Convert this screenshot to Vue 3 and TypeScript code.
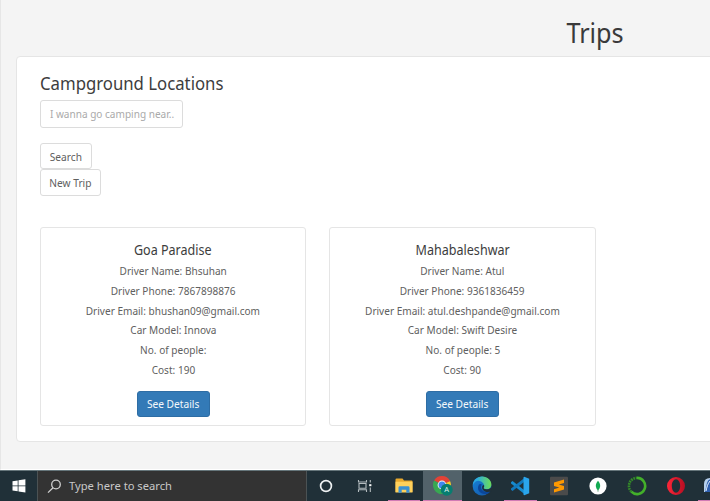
<script setup lang="ts">
interface Trip {
  name: string
  details: string[]
}

const trips: Trip[] = [
  {
    name: 'Goa Paradise',
    details: [
      'Driver Name: Bhsuhan',
      'Driver Phone: 7867898876',
      'Driver Email: bhushan09@gmail.com',
      'Car Model: Innova',
      'No. of people:',
      'Cost: 190',
    ],
  },
  {
    name: 'Mahabaleshwar',
    details: [
      'Driver Name: Atul',
      'Driver Phone: 9361836459',
      'Driver Email: atul.deshpande@gmail.com',
      'Car Model: Swift Desire',
      'No. of people: 5',
      'Cost: 90',
    ],
  },
]
</script>

<template>
  <div class="screen">
    <main class="page">
      <h1>Trips</h1>
      <section class="panel">
        <h2>Campground Locations</h2>
        <form class="search" @submit.prevent>
          <div class="field"><input type="text" placeholder="I wanna go camping near.." /></div>
          <button class="btn search-btn" type="submit"><span>Search</span></button>
          <button class="btn new-btn" type="button"><span>New Trip</span></button>
        </form>
        <div class="cards">
          <article v-for="trip in trips" :key="trip.name" class="card">
            <h3>{{ trip.name }}</h3>
            <p v-for="line in trip.details" :key="line">{{ line }}</p>
            <button class="btn primary" type="button"><span>See Details</span></button>
          </article>
        </div>
      </section>
    </main>

    <footer class="taskbar">
      <div class="start">
        <svg width="14" height="14" viewBox="0 0 14 14" fill="#fff">
          <path d="M.5 2.2 5.7 1.4v5H.5zM6.5 1.3 13.4.3v6.1H6.5zM.5 7.2h5.2v5L.5 11.4zM6.5 7.2h6.9v6.2l-6.9-1z" />
        </svg>
      </div>
      <div class="finder">
        <svg width="15" height="15" viewBox="0 0 15 15" fill="none" stroke="#d0d0d0" stroke-width="1.3">
          <circle cx="9" cy="5.5" r="4.3" />
          <path d="M6 8.8 1 13.6" />
        </svg>
        <span>Type here to search</span>
      </div>
      <div class="apps">
        <div class="app">
          <svg width="20" height="20" viewBox="0 0 20 20"><circle cx="10" cy="10" r="5.4" fill="none" stroke="#eef1f2" stroke-width="1.7" /></svg>
        </div>
        <div class="app">
          <svg width="20" height="20" viewBox="0 0 20 20" fill="none" stroke="#b4bcbf" stroke-width="1.1">
            <path d="M3.5 4v2h8V4M3.5 16v-2.3h8V16M4 7.5h7v4.8H4zM15.3 4v2.5M15.3 11.5V16" />
            <path d="M14.2 9.2h2.2" stroke-width="2" stroke="#fff" />
          </svg>
        </div>
        <div class="app open">
          <svg width="20" height="20" viewBox="0 0 20 20">
            <path d="M1.5 3.5q0-1 1-1h6l1.5 2h7.5q1 0 1 1V16h-17z" fill="#e9a92d" />
            <path d="M1.5 5.7h17v10.8h-17z" fill="#ffd15c" />
            <path d="M4.5 16.8v-5.2q0-1.4 1.4-1.4h8.2q1.4 0 1.4 1.4v5.2h-3.2v-3.1H7.7v3.1z" fill="#3a91d5" />
          </svg>
        </div>
        <div class="app open active">
          <svg width="22" height="22" viewBox="0 0 22 22">
            <path d="M10 10 2.1 5.5A9.1 9.1 0 0 1 18 6z" fill="#e34236" />
            <path d="M10 10 18 6a9.1 9.1 0 0 1-8 13.1z" fill="#f9cb27" />
            <path d="M10 10 10 19.1A9.1 9.1 0 0 1 2.1 5.5z" fill="#38a852" />
            <path d="M10 5.8h7.9" stroke="#e34236" stroke-width="1" />
            <circle cx="10" cy="10" r="4.4" fill="#f4f7fa" />
            <circle cx="10" cy="10" r="3.5" fill="#4286ef" />
            <circle cx="14.7" cy="14.7" r="6" fill="#087d70" />
            <text x="14.7" y="17.3" text-anchor="middle" font-family="Noto Sans, sans-serif" font-size="7.5" fill="#d9efeb">A</text>
          </svg>
        </div>
        <div class="app">
          <svg width="20" height="20" viewBox="0 0 20 20">
            <defs>
              <linearGradient id="edge-top" x1="0" x2="1"><stop offset=".2" stop-color="#2aaae2" /><stop offset=".9" stop-color="#66d765" /></linearGradient>
              <linearGradient id="edge-low" x1="0" y1="0" x2="1" y2="1"><stop stop-color="#1684d9" /><stop offset="1" stop-color="#1554a5" /></linearGradient>
            </defs>
            <circle cx="10" cy="10" r="9.4" fill="url(#edge-low)" />
            <path d="M.7 9.2C1.1 4.2 5 .6 10.2.6c5.5 0 9.4 4 9.2 8.5-.2 3-2.6 4.4-5.2 4.2-2.5-.1-3.1-1-2.2-2.1C14 7.5 5-.2.7 9.2" fill="url(#edge-top)" />
            <path d="M7 8.5c-3 5.2 1.2 10.1 7 9.5 2-.2 3.5-1.2 4.4-2.8-4.7 2-9.5-.2-9.5-4.2 0-1 .3-1.8 1.1-2.5C9 7.8 7.8 7.7 7 8.5" fill="#0b469a" />
            <path d="M11.8 9c.7 1 .2 1.8-.1 2.500-.4 1 .5 1.700 2.500 1.800 2 .1 3.600-.5 4.500-1.600l1.200 2-1 1.700c-4.500 1.500-8.800-.6-8.800-4 0-1.200.7-2.100 1.700-2.400" fill="#203038" />
          </svg>
        </div>
        <div class="app open">
          <svg width="20" height="20" viewBox="0 0 20 20">
            <path d="m1 6.300 1.500-1.200L15 14.800v3.700L1 7.600z" fill="#168bd0" />
            <path d="m1 13.700 1.500 1.200L15 5.200V1.500L1 12.400z" fill="#1179bd" />
            <path d="m14.300.7 4.900 2.100v14.400l-4.900 2.100-.8-.6V1.300z" fill="#2aa5ec" />
          </svg>
        </div>
        <div class="app">
          <svg width="20" height="20" viewBox="0 0 20 20">
            <rect x="1" y=".8" width="18" height="18.4" rx="1" fill="#4b4b4b" />
            <path d="m5 6.500 10-2.900v3.300L9.800 8.400 15 10v3.600L5 16.500v-3.300l5.300-1.700L5 9.900z" fill="#ff9800" />
          </svg>
        </div>
        <div class="app">
          <svg width="20" height="20" viewBox="0 0 20 20">
            <circle cx="10" cy="10" r="8.6" fill="#fff" />
            <path d="M10 4.700c2.900 3.300 2.900 6.800 0 10-2.900-3.200-2.900-6.700 0-10" fill="#13aa52" />
            <path d="M10 13v3" stroke="#78a98a" stroke-width=".7" />
          </svg>
        </div>
        <div class="app">
          <svg width="20" height="20" viewBox="0 0 20 20" fill="none" stroke="#43b02a">
            <path d="M10 1.900a8.100 8.100 0 1 1-5.700 13.800" stroke-width="2.6" />
            <path d="M4.300 15.700A8.100 8.100 0 0 1 10 1.900" stroke-width="2.6" stroke-dasharray="1.7 .8" stroke="#348b29" />
          </svg>
        </div>
        <div class="app">
          <svg width="20" height="20" viewBox="0 0 20 20">
            <defs><linearGradient id="opera" x2="1"><stop stop-color="#ff2638" /><stop offset="1" stop-color="#b70e22" /></linearGradient></defs>
            <path fill-rule="evenodd" d="M10 1a9 9 0 1 0 0 18 9 9 0 0 0 0-18m0 2.300c2.400 0 4.200 3 4.200 6.700s-1.800 6.700-4.200 6.700S5.800 13.700 5.800 10 7.600 3.300 10 3.300" fill="url(#opera)" />
          </svg>
        </div>
        <div class="app open">
          <svg width="20" height="20" viewBox="0 0 20 20">
            <path d="M0 16V8q0-6 6-6h13v14z" fill="#b6d0ed" />
            <path d="M1 16 3 7q1-4 5-4v13z" fill="#2e5faf" />
            <path d="M2 15c1-4 1.500-7 4-10" stroke="#eaf4ff" fill="none" />
          </svg>
        </div>
      </div>
    </footer>
  </div>
</template>

<style>
body {
  margin: 0;
  overflow: hidden;
}
</style>

<style scoped>
* {
  box-sizing: border-box;
}

.screen {
  width: 710px;
  height: 501px;
  overflow: hidden;
  display: flex;
  flex-direction: column;
  font-family: 'Noto Sans', 'Open Sans', sans-serif;
  color: #606060;
}

.page {
  height: 470px;
  background: #f4f4f4;
  border-left: 1px solid #e6e6e6;
  border-bottom: 1px solid #fff;
}

h1,
h2,
h3,
p {
  margin: 0;
  font-weight: 400;
  white-space: nowrap;
}

h1 {
  width: 1188px;
  height: 56px;
  padding-top: 14px;
  text-align: center;
  font-size: 28px;
  line-height: 37px;
  transform: scaleX(0.9);
  color: #3a3a3a;
}

.panel {
  width: 1160px;
  height: 386px;
  margin-left: 15px;
  padding: 13px 23px 15px;
  background: #fff;
  border: 1px solid #e5e5e5;
  border-radius: 4px;
}

h2 {
  font-size: 18.5px;
  line-height: 25px;
  transform: scaleX(0.905);
  transform-origin: left;
  color: #3d3d3d;
}

.search {
  display: flex;
  flex-direction: column;
  align-items: flex-start;
  padding-top: 5px;
}

.field {
  width: 143px;
  height: 28px;
  margin-bottom: 15px;
  border: 1px solid #dcdcdc;
  border-radius: 3px;
  overflow: hidden;
}

input {
  display: block;
  width: 158px;
  height: 25px;
  padding: 0 0 0 10px;
  border: 0;
  background: transparent;
  font: 11.3px 'Noto Sans', sans-serif;
  transform: scaleX(0.89);
  transform-origin: left;
}

input::placeholder {
  color: #aaa;
}

.btn {
  height: 27px;
  padding: 0;
  border: 1px solid #dcdcdc;
  border-radius: 3px;
  background: #fff;
  font: 11.3px 'Noto Sans', sans-serif;
  white-space: nowrap;
  color: #606060;
}

.btn span {
  display: inline-block;
  transform: scaleX(0.9);
}

.search-btn {
  width: 52px;
  height: 26px;
}

.new-btn {
  width: 61px;
}

.new-btn span {
  margin: 0 -3px;
}

.cards {
  display: flex;
  gap: 23px;
  margin-top: 31px;
}

.card {
  width: 266px;
  height: 199px;
  padding-top: 12px;
  display: flex;
  flex-direction: column;
  align-items: center;
  border: 1px solid #e5e5e5;
  border-radius: 3px;
}

.card + .card {
  width: 267px;
}

h3 {
  font-size: 13.5px;
  line-height: 21px;
  transform: scaleX(0.93);
  color: #3d3d3d;
}

p {
  font-size: 11.3px;
  line-height: 19.8px;
  transform: scaleX(0.89);
}

.primary {
  width: 73px;
  height: 26px;
  margin-top: 11px;
  background: #337ab7;
  border-color: #2e6da4;
  color: #f4f8fb;
}

.primary span {
  margin: 0 -3px;
}

.taskbar {
  height: 31px;
  display: flex;
  border-top: 1px solid #66767b;
  background: #203038;
}

.start {
  flex: none;
  width: 37px;
  display: flex;
  align-items: center;
  justify-content: center;
}

.finder {
  flex: none;
  width: 270px;
  padding-left: 9px;
  display: flex;
  align-items: center;
  gap: 7px;
  background: #333;
  border-left: 1px solid #4b5254;
  border-right: 1px solid #4b5254;
  font-size: 11.2px;
  color: #c8c8c8;
}

.finder span {
  padding-bottom: 1px;
}

.apps {
  display: flex;
  flex: none;
}

.app {
  position: relative;
  width: 38.8px;
  display: flex;
  align-items: center;
  justify-content: center;
}

.app svg {
  flex: none;
}

.open::after {
  content: '';
  position: absolute;
  left: 3px;
  right: 3px;
  bottom: 0;
  height: 1px;
  background: #d27bb5;
}

.active {
  background: #52626a;
}

.active::after {
  left: 0;
  right: 0;
}
</style>
